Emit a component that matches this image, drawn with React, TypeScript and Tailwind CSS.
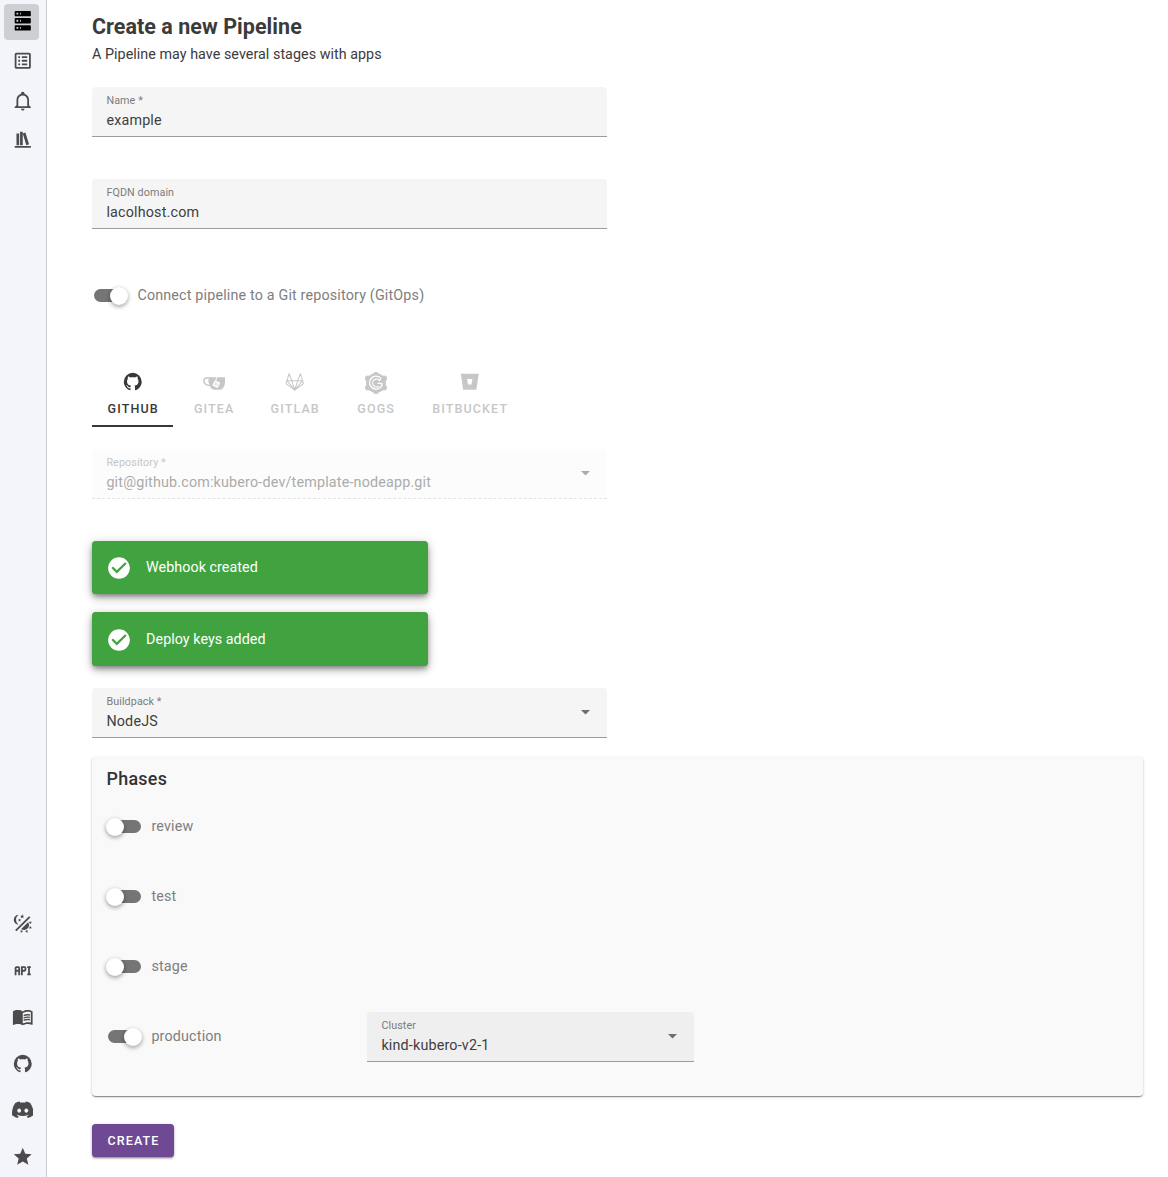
import type { ReactNode } from "react"
import clsx from "clsx"
import { MdMenuBook } from "react-icons/md"
import { SiDiscord } from "react-icons/si"

// material design icons paths, 24x24
const icons = {
  server:
    "M4,1H20A1,1 0 0,1 21,2V6A1,1 0 0,1 20,7H4A1,1 0 0,1 3,6V2A1,1 0 0,1 4,1M4,9H20A1,1 0 0,1 21,10V14A1,1 0 0,1 20,15H4A1,1 0 0,1 3,14V10A1,1 0 0,1 4,9M4,17H20A1,1 0 0,1 21,18V22A1,1 0 0,1 20,23H4A1,1 0 0,1 3,22V18A1,1 0 0,1 4,17M9,5H10V3H9V5M9,13H10V11H9V13M9,21H10V19H9V21M5,3V5H7V3H5M5,11V13H7V11H5M5,19V21H7V19H5Z",
  list: "M11 15H17V17H11V15M9 7H7V9H9V7M11 13H17V11H11V13M11 9H17V7H11V9M9 11H7V13H9V11M21 5V19C21 20.1 20.1 21 19 21H5C3.9 21 3 20.1 3 19V5C3 3.9 3.9 3 5 3H19C20.1 3 21 3.9 21 5M19 5H5V19H19V5M9 15H7V17H9V15Z",
  bell: "M10 21H14C14 22.1 13.1 23 12 23S10 22.1 10 21M21 19V20H3V19L5 17V11C5 7.9 7 5.2 10 4.3V4C10 2.9 10.9 2 12 2S14 2.9 14 4V4.3C17 5.2 19 7.9 19 11V17L21 19M17 11C17 8.2 14.8 6 12 6S7 8.2 7 11V18H17V11Z",
  bookshelf:
    "M9 3V18H12V3H9M12 5L16 18L19 17L15 4L12 5M5 5V18H8V5H5M3 19V21H21V19H3Z",
  theme:
    "M7.5,2C5.71,3.15 4.5,5.18 4.5,7.5C4.5,9.82 5.71,11.85 7.53,13C4.46,13 2,10.54 2,7.5A5.5,5.5 0 0,1 7.5,2M19.07,3.5L20.5,4.93L4.93,20.5L3.5,19.07L19.07,3.5M12.89,5.93L11.41,5L9.97,6L10.39,4.3L9,3.24L10.75,3.12L11.33,1.47L12,3.1L13.73,3.13L12.38,4.26L12.89,5.93M9.59,9.54L8.43,8.81L7.31,9.59L7.65,8.27L6.56,7.44L7.92,7.35L8.37,6.06L8.88,7.33L10.24,7.36L9.19,8.23L9.59,9.54M19,13.5A5.5,5.5 0 0,1 13.5,19C12.28,19 11.15,18.6 10.24,17.93L17.93,10.24C18.6,11.15 19,12.28 19,13.5M14.6,20.08L17.37,18.93L17.13,22.28L14.6,20.08M18.93,17.38L20.08,14.61L22.28,17.15L18.93,17.38M20.08,12.42L18.94,9.64L22.28,9.88L20.08,12.42M9.63,18.93L12.4,20.08L9.87,22.27L9.63,18.93Z",
  api: "M7 7H5A2 2 0 0 0 3 9V17H5V13H7V17H9V9A2 2 0 0 0 7 7M7 11H5V9H7M14 7H10V17H12V13H14A2 2 0 0 0 16 11V9A2 2 0 0 0 14 7M14 11H12V9H14M20 9V15H21V17H17V15H18V9H17V7H21V9Z",
  github:
    "M12,2A10,10 0 0,0 2,12C2,16.42 4.87,20.17 8.84,21.5C9.34,21.58 9.5,21.27 9.5,21C9.5,20.77 9.5,20.14 9.5,19.31C6.73,19.91 6.14,17.97 6.14,17.97C5.68,16.81 5.03,16.5 5.03,16.5C4.12,15.88 5.1,15.9 5.1,15.9C6.1,15.97 6.63,16.93 6.63,16.93C7.5,18.45 8.97,18 9.54,17.76C9.63,17.11 9.89,16.67 10.17,16.42C7.95,16.17 5.62,15.31 5.62,11.5C5.62,10.39 6,9.5 6.65,8.79C6.55,8.54 6.2,7.5 6.75,6.15C6.75,6.15 7.59,5.88 9.5,7.17C10.29,6.95 11.15,6.84 12,6.84C12.85,6.84 13.71,6.95 14.5,7.17C16.41,5.88 17.25,6.15 17.25,6.15C17.8,7.5 17.45,8.54 17.35,8.79C18,9.5 18.38,10.39 18.38,11.5C18.38,15.32 16.04,16.16 13.81,16.41C14.17,16.72 14.5,17.33 14.5,18.26C14.5,19.6 14.5,20.68 14.5,21C14.5,21.27 14.66,21.59 15.17,21.5C19.14,20.16 22,16.42 22,12A10,10 0 0,0 12,2Z",
  star: "M12,17.27L18.18,21L16.54,13.97L22,9.24L14.81,8.62L12,2L9.19,8.62L2,9.24L7.45,13.97L5.82,21L12,17.27Z",
  check:
    "M12 2C6.5 2 2 6.5 2 12S6.5 22 12 22 22 17.5 22 12 17.5 2 12 2M10 17L5 12L6.41 10.59L10 14.17L17.59 6.58L19 8L10 17Z",
  bitbucket: "M2 3H22L19.4 21H4.6L2 3M9 9L10 15H14L15 9H9Z",
}

function Icon({ name, className = "size-[21.5px]" }: { name: keyof typeof icons; className?: string }) {
  return (
    <svg viewBox="0 0 24 24" className={className} fill="currentColor">
      <path d={icons[name]} />
    </svg>
  )
}

function GiteaIcon() {
  return (
    <svg viewBox="0 0 22.4 13" className="mt-[2px] ml-[1.5px] h-[13px] w-[22.4px]">
      <path
        d="M7.2 1.1H3.2C1.4 1.1 0.8 2.6 0.9 4C1.1 6.6 3.4 8.6 7.4 8.4"
        fill="none"
        stroke="currentColor"
        strokeWidth="1.5"
      />
      <path
        d="M6 0.3H22.1V4.2C22.1 8.6 20.2 12.8 17 12.8H11.2C8.6 12.8 7.4 10.8 7 8.6L5.2 4.5Z"
        fill="currentColor"
      />
      <path d="M13.6 0.3L12.8 4.2" stroke="white" strokeWidth="0.9" />
      <rect x="10.3" y="4.2" width="6" height="6" rx="1" fill="white" transform="rotate(25 13.3 7.2)" />
      <path d="M13.1 5L11.9 9M12.6 6.8L14.7 7.2L14 9.2" fill="none" stroke="currentColor" strokeWidth="0.6" />
    </svg>
  )
}

function GitlabIcon() {
  return (
    <svg
      viewBox="0 0 24 24"
      className="size-[21.5px]"
      fill="none"
      stroke="currentColor"
      strokeWidth="1.15"
      strokeLinejoin="round"
    >
      <path d="M12 21.2L2.3 14L5.7 3L8.7 10.8H15.3L18.3 3L21.7 14L12 21.2Z" />
      <path d="M12 21.2L8.7 10.8L3.5 11L12 21.2L15.3 10.8L20.5 11L12 21.2" />
    </svg>
  )
}

function GogsIcon() {
  return (
    <svg viewBox="0 0 24 24" className="mt-[2px] size-[24px]">
      <g fill="currentColor">
        <circle cx="12" cy="12" r="10" />
        <circle cx="12" cy="3.6" r="2.7" />
        <circle cx="12" cy="20.4" r="2.7" />
        <circle cx="3.9" cy="7.4" r="2.9" />
        <circle cx="20.1" cy="7.4" r="2.9" />
        <circle cx="3.9" cy="16.6" r="2.9" />
        <circle cx="20.1" cy="16.6" r="2.9" />
      </g>
      <path
        d="M17 7.4A6.5 6.5 0 1 0 17.8 14.6V12.4H13.4"
        fill="none"
        stroke="white"
        strokeWidth="1.4"
      />
      <path d="M17 7.4L15.6 9.6A3.9 3.9 0 1 0 14.6 15.2" fill="none" stroke="white" strokeWidth="1.1" />
    </svg>
  )
}

function NavItem({ active, children }: { active?: boolean; children: ReactNode }) {
  return (
    <a
      className={clsx(
        "flex h-9 w-[35px] items-center justify-center rounded pb-[2.5px] pl-[2px]",
        active ? "bg-[#cecfd3] text-black" : "text-[#4b4b4e]"
      )}
    >
      {children}
    </a>
  )
}

function Sidebar() {
  return (
    <nav className="flex h-[1177px] w-[47px] shrink-0 flex-col justify-between border-r border-[#cbccd0] bg-[#f4f5fa] pt-1 pl-1">
      <div className="flex flex-col gap-[3.8px]">
        <NavItem active>
          <Icon name="server" />
        </NavItem>
        <NavItem>
          <Icon name="list" />
        </NavItem>
        <NavItem>
          <Icon name="bell" />
        </NavItem>
        <NavItem>
          <Icon name="bookshelf" />
        </NavItem>
      </div>
      <div className="flex flex-col gap-[10.5px] pb-[1.4px]">
        <NavItem>
          <Icon name="theme" />
        </NavItem>
        <NavItem>
          <Icon name="api" />
        </NavItem>
        <NavItem>
          <MdMenuBook className="size-[21.5px]" />
        </NavItem>
        <NavItem>
          <Icon name="github" />
        </NavItem>
        <NavItem>
          <SiDiscord className="size-[21.5px]" />
        </NavItem>
        <NavItem>
          <Icon name="star" />
        </NavItem>
      </div>
    </nav>
  )
}

type FieldProps = {
  label: string
  value: string
  select?: boolean
  disabled?: boolean
  className?: string
}

function Field({ label, value, select, disabled, className = "w-[515px] bg-[#f5f5f5]" }: FieldProps) {
  return (
    <div
      className={clsx(
        "flex h-[50px] items-center justify-between rounded-t border-b pr-[17px] pl-[14.4px]",
        className,
        disabled ? "border-dashed border-[#e4e4e4]" : "border-[#9c9c9c]"
      )}
    >
      <div className="pb-px">
        <div
          className={clsx(
            "h-[17px] text-[10.74px] leading-[17px] tracking-[0.1px]",
            disabled ? "text-[#c6c6c6]" : "text-[#7b7b7b]"
          )}
        >
          {label}
        </div>
        <div
          className={clsx(
            "h-[22px] text-[14.32px] leading-[22px] tracking-[0.18px]",
            disabled ? "text-[#ababab]" : "text-[#404040]"
          )}
        >
          {value}
        </div>
      </div>
      {select && (
        <svg viewBox="0 0 10 5" className={clsx("h-[4.5px] w-[9px]", disabled ? "text-[#ababab]" : "text-[#6e6e6e]")}>
          <path d="M0 0H10L5 5Z" fill="currentColor" />
        </svg>
      )}
    </div>
  )
}

function Toggle({ label, on }: { label: string; on?: boolean }) {
  return (
    <div className="flex h-[18px] items-center">
      <div
        className={clsx(
          "flex h-[13px] w-[33px] items-center rounded-full bg-[#757575]",
          on ? "justify-end" : "justify-start"
        )}
      >
        <div
          className={clsx(
            "mt-px size-[18px] shrink-0 rounded-full bg-white shadow-[0_2px_4px_rgba(0,0,0,0.25),0_1px_5px_rgba(0,0,0,0.15)]",
            on ? "-mr-px" : "-ml-[2px]"
          )}
        />
      </div>
      <span className="ml-[10.4px] text-[14.32px] leading-[18px] tracking-[0.17px] text-[#7e7e7e]">{label}</span>
    </div>
  )
}

function Tab({ label, active, wide, children }: { label: string; active?: boolean; wide?: boolean; children: ReactNode }) {
  return (
    <div
      className={clsx(
        "flex h-[65px] flex-col items-center border-b-2 pt-2",
        wide ? "w-[107px]" : "w-[81px]",
        active ? "border-[#383838] text-[#383838]" : "border-transparent text-[#c7c7c7]"
      )}
    >
      <div className="flex h-6 items-center">{children}</div>
      <span className="mt-[6px] ml-[1.4px] text-[12.53px] leading-[18px] font-medium tracking-[1.12px]">{label}</span>
    </div>
  )
}

function Alert({ text, className }: { text: string; className: string }) {
  return (
    <div
      className={clsx(
        "flex w-[336px] items-center rounded-[3.6px] bg-[#40a340] pl-4 text-white shadow-[0_3px_5px_-1px_rgba(0,0,0,0.35),0_5px_9px_rgba(0,0,0,0.17),0_1px_12px_rgba(0,0,0,0.14)]",
        className
      )}
    >
      <Icon name="check" className="-ml-[2px] size-[26px]" />
      <span className="ml-[14.1px] text-[14.32px] tracking-[0.04px]">{text}</span>
    </div>
  )
}

function Phases() {
  return (
    <section className="mt-[19px] h-[339px] w-[1051px] rounded bg-[#f9f9f9] pt-[11px] pl-[14.5px] shadow-[0_2px_1px_-1px_rgba(0,0,0,0.25),0_1px_1px_rgba(0,0,0,0.18),0_1px_3px_rgba(0,0,0,0.2)]">
      <h3 className="text-[17.9px] leading-[22px] font-medium tracking-[0.27px] text-[#333]">Phases</h3>
      <div className="mt-[27px] ml-[1.5px] flex flex-col gap-[52px]">
        <Toggle label="review" />
        <Toggle label="test" />
        <Toggle label="stage" />
        <div className="-mt-[16px] flex h-[50px] items-center">
          <div className="w-[259px]">
            <Toggle label="production" on />
          </div>
          <Field label="Cluster" value="kind-kubero-v2-1" select className="mt-[2px] w-[327px] bg-[#efefef]" />
        </div>
      </div>
    </section>
  )
}

export default function App() {
  return (
    <div className="flex h-[1177px] overflow-hidden bg-white font-[Roboto,sans-serif]">
      <Sidebar />
      <main className="flex flex-col items-start pl-[45px]">
        <h1 className="mt-[14px] text-[21.48px] leading-[26px] font-bold tracking-[0.05px] text-[#3b3b3b]">
          Create a new Pipeline
        </h1>
        <p className="mt-[3px] text-[14.32px] leading-[22px] tracking-[0.04px] text-[#3b3b3b]">
          A Pipeline may have several stages with apps
        </p>
        <div className="mt-[22px] flex flex-col gap-[42px]">
          <Field label="Name *" value="example" />
          <Field label="FQDN domain" value="lacolhost.com" />
        </div>
        <div className="mt-[57px] ml-[2px]">
          <Toggle label="Connect pipeline to a Git repository (GitOps)" on />
        </div>
        <div className="mt-[58px] flex">
          <Tab label="GITHUB" active>
            <Icon name="github" />
          </Tab>
          <Tab label="GITEA">
            <GiteaIcon />
          </Tab>
          <Tab label="GITLAB">
            <GitlabIcon />
          </Tab>
          <Tab label="GOGS">
            <GogsIcon />
          </Tab>
          <Tab label="BITBUCKET" wide>
            <Icon name="bitbucket" />
          </Tab>
        </div>
        <div className="mt-[22px]">
          <Field
            label="Repository *"
            value="git@github.com:kubero-dev/template-nodeapp.git"
            select
            disabled
            className="w-[515px] bg-[#fcfcfc]"
          />
        </div>
        <Alert text="Webhook created" className="mt-[42px] h-[53px]" />
        <Alert text="Deploy keys added" className="mt-[18px] h-[54px] pt-px" />
        <div className="mt-[22px]">
          <Field label="Buildpack *" value="NodeJS" select />
        </div>
        <Phases />
        <button className="mt-[28px] h-[33px] w-[82px] rounded-[3.6px] bg-[#704995] pt-px pl-px text-[12.53px] font-medium tracking-[1.12px] text-white shadow-[0_2px_2px_-1px_rgba(0,0,0,0.3),0_1px_3px_rgba(0,0,0,0.3)]">
          CREATE
        </button>
      </main>
    </div>
  )
}
